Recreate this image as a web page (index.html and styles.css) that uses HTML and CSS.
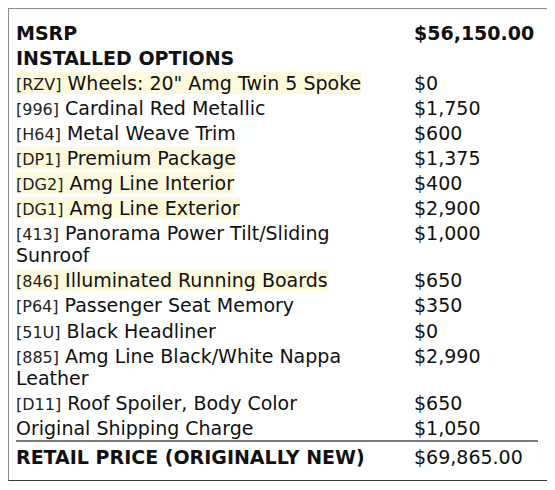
FILE: index.html
```html
<!DOCTYPE html>
<html>
<head>
<meta charset="utf-8">
<link rel="stylesheet" href="styles.css">
</head>
<body>
<div class="sticker">
  <div class="row bold"><div class="label">MSRP</div><div class="price">$56,150.00</div></div>
  <div class="row bold"><div class="label">INSTALLED OPTIONS</div><div class="price"></div></div>
  <div class="row"><div class="label"><span class="hl"><span class="code">[RZV]</span> Wheels: 20" Amg Twin 5 Spoke</span></div><div class="price">$0</div></div>
  <div class="row"><div class="label"><span class="code">[996]</span> Cardinal Red Metallic</div><div class="price">$1,750</div></div>
  <div class="row"><div class="label"><span class="code">[H64]</span> Metal Weave Trim</div><div class="price">$600</div></div>
  <div class="row"><div class="label"><span class="hl"><span class="code">[DP1]</span> Premium Package</span></div><div class="price">$1,375</div></div>
  <div class="row"><div class="label"><span class="hl"><span class="code">[DG2]</span> Amg Line Interior</span></div><div class="price">$400</div></div>
  <div class="row"><div class="label"><span class="hl"><span class="code">[DG1]</span> Amg Line Exterior</span></div><div class="price">$2,900</div></div>
  <div class="row"><div class="label"><span class="code">[413]</span> Panorama Power Tilt/Sliding Sunroof</div><div class="price">$1,000</div></div>
  <div class="row"><div class="label"><span class="hl"><span class="code">[846]</span> Illuminated Running Boards</span></div><div class="price">$650</div></div>
  <div class="row"><div class="label"><span class="code">[P64]</span> Passenger Seat Memory</div><div class="price">$350</div></div>
  <div class="row"><div class="label"><span class="code">[51U]</span> Black Headliner</div><div class="price">$0</div></div>
  <div class="row"><div class="label"><span class="code">[885]</span> Amg Line Black/White Nappa Leather</div><div class="price">$2,990</div></div>
  <div class="row"><div class="label"><span class="code">[D11]</span> Roof Spoiler, Body Color</div><div class="price">$650</div></div>
  <div class="row"><div class="label">Original Shipping Charge</div><div class="price">$1,050</div></div>
  <div class="row total"><div class="label">RETAIL PRICE (ORIGINALLY NEW)</div><div class="price">$69,865.00</div></div>
</div>
</body>
</html>
```

FILE: styles.css
```css
body {
  margin: 8px;
  background: #ffffff;
  font-family: "DejaVu Sans", sans-serif;
  color: #111111;
}

.sticker {
  box-sizing: border-box;
  width: 541px;
  height: 473px;
  border: 1px solid;
  border-color: #8c8c8c #3a3a3a #3a3a3a #8c8c8c;
  padding: 11px 10px 8px 7px;
  box-shadow: 1px 1px 1px rgba(0, 0, 0, 0.12);
}

.row {
  display: grid;
  grid-template-columns: 398px 1fr;
  font-size: 19px;
  line-height: 22px;
  padding: 1.55px 0;
}

.label {
  padding-right: 12px;
}

.bold {
  font-weight: bold;
}

.code {
  font-size: 16px;
  line-height: 16px;
  color: #222222;
}

.hl {
  background: #fcf9dc;
}

.total {
  border-top: 2px solid #7a7a7a;
  padding-top: 3.5px;
}

.total .label {
  font-weight: bold;
}
```
